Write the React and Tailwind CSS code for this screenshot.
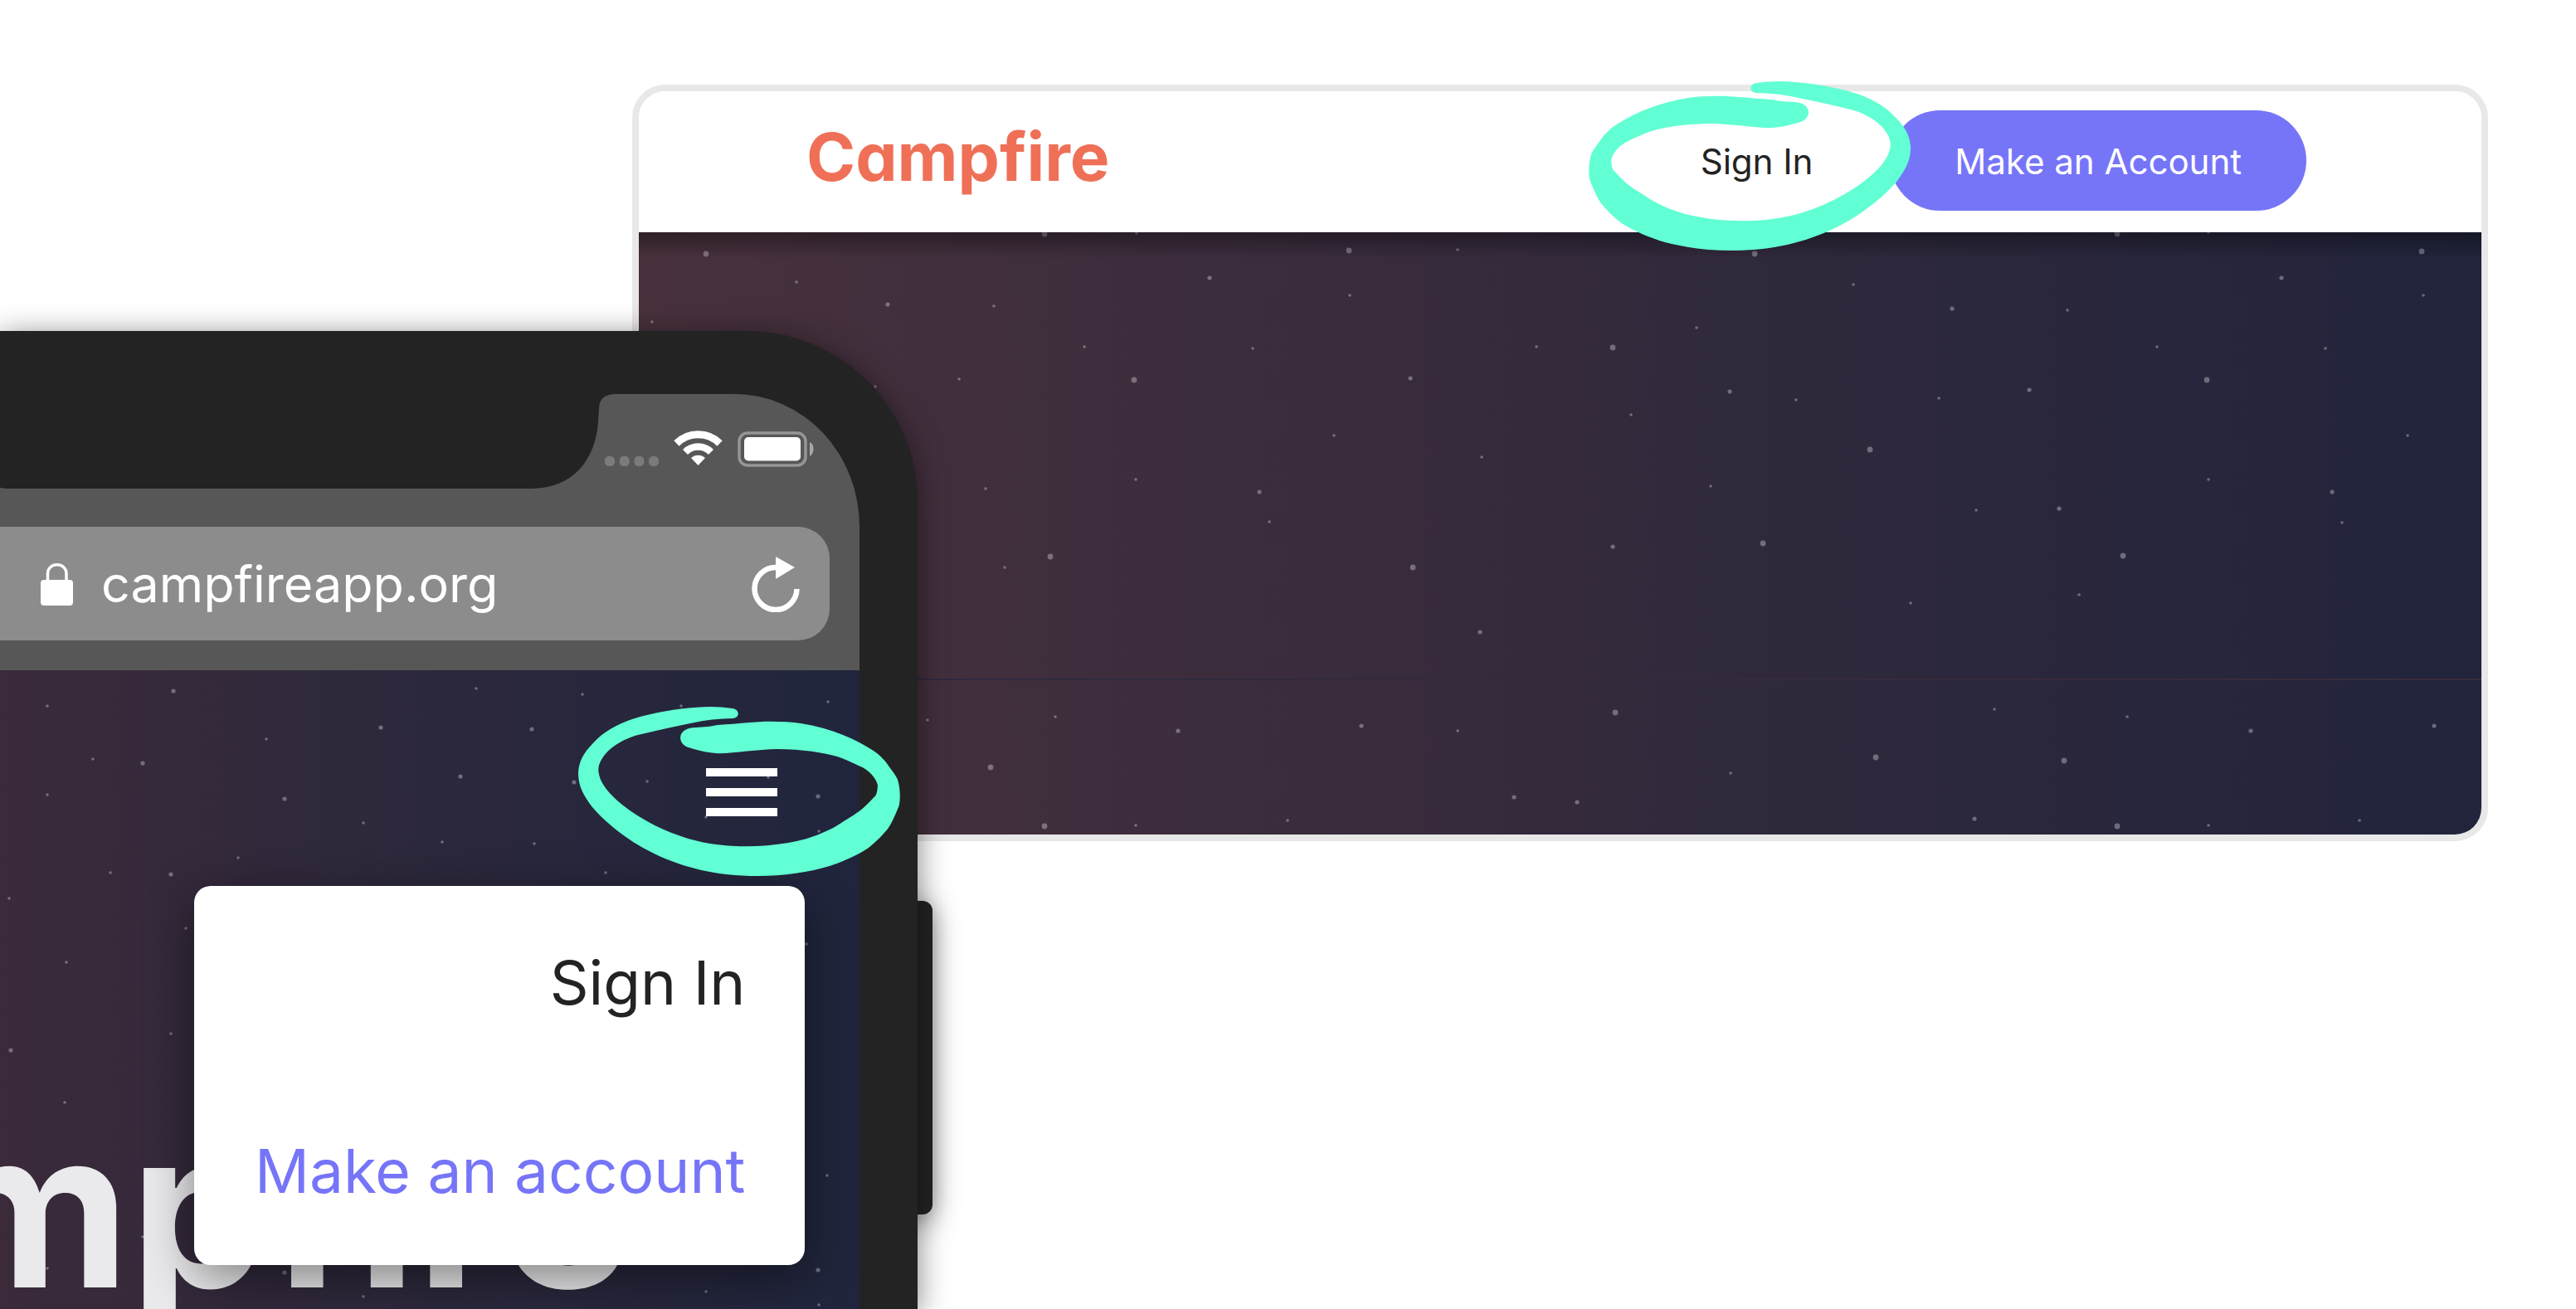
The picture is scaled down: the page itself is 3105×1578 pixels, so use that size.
import React from "react";

const BIG = 4;
const MID = 3;
const SMALL = 2;

const skyStars = [
  [851, 306, BIG], [960, 340, SMALL], [1070, 367, MID], [1198, 369, SMALL], [1259, 282, BIG],
  [1370, 281, SMALL], [1458, 335, MID], [786, 388, SMALL], [1307, 418, SMALL], [1510, 420, SMALL],
  [1156, 457, SMALL], [1367, 458, BIG], [1055, 466, SMALL], [1626, 302, BIG], [1757, 301, SMALL],
  [1627, 356, SMALL], [2045, 395, SMALL], [1852, 418, SMALL], [1944, 419, BIG], [1700, 456, MID],
  [2085, 472, MID], [1966, 500, SMALL], [1608, 525, SMALL], [1786, 551, SMALL], [1369, 578, SMALL],
  [1188, 589, SMALL], [1518, 593, MID], [2062, 586, SMALL], [1530, 629, SMALL], [1266, 671, BIG],
  [1211, 684, SMALL], [1944, 659, MID], [1703, 684, BIG], [1784, 762, MID], [1118, 868, SMALL],
  [1272, 864, SMALL], [1420, 881, MID], [1641, 875, MID], [1757, 881, SMALL], [1947, 859, BIG],
  [1194, 925, BIG], [2086, 932, SMALL], [1825, 961, MID], [1901, 967, MID], [1259, 996, BIG],
  [1369, 995, SMALL], [1552, 989, SMALL], [2115, 306, BIG], [2234, 343, SMALL], [2353, 372, MID],
  [2492, 374, SMALL], [2552, 282, BIG], [2662, 280, SMALL], [2919, 303, BIG], [2750, 335, MID],
  [2921, 356, SMALL], [2600, 418, SMALL], [2803, 420, SMALL], [2446, 470, MID], [2337, 480, SMALL],
  [2165, 482, SMALL], [2660, 458, BIG], [2902, 525, SMALL], [2254, 542, BIG], [2662, 578, SMALL],
  [2811, 593, MID], [2382, 615, SMALL], [2482, 613, MID], [2823, 630, SMALL], [2125, 655, BIG],
  [2559, 670, BIG], [2506, 717, SMALL], [2303, 727, SMALL], [2404, 855, SMALL], [2564, 864, SMALL],
  [2713, 881, MID], [2934, 875, MID], [2261, 913, BIG], [2488, 917, BIG], [2380, 987, MID],
  [2552, 996, BIG], [2662, 995, SMALL], [2844, 989, SMALL],
];

const phoneStars = [
  [57, 851, SMALL], [209, 833, MID], [574, 830, SMALL], [702, 837, SMALL], [459, 877, MID],
  [641, 879, MID], [321, 891, SMALL], [112, 915, SMALL], [172, 920, MID], [57, 958, SMALL],
  [343, 963, MID], [555, 936, MID], [692, 943, MID], [438, 992, SMALL], [533, 1015, SMALL],
  [644, 1017, SMALL], [287, 1034, SMALL], [133, 1052, SMALL], [206, 1054, MID], [11, 1083, SMALL],
  [224, 1119, SMALL], [80, 1160, SMALL], [821, 851, SMALL], [998, 846, SMALL], [780, 942, SMALL],
  [926, 937, SMALL], [986, 960, MID], [851, 985, SMALL], [987, 1002, SMALL], [730, 1052, SMALL],
  [972, 1138, SMALL], [206, 1246, SMALL], [13, 1266, MID], [78, 1329, SMALL], [997, 1417, SMALL],
  [172, 1491, SMALL], [343, 1534, MID], [986, 1531, MID], [851, 1557, SMALL], [438, 1563, SMALL],
  [987, 1573, SMALL], [57, 1529, SMALL],
];

function Stars({ points, x, y }) {
  return (
    <svg className="absolute inset-0 h-full w-full" aria-hidden="true">
      <g transform={`translate(${-x} ${-y})`} fill="#ffffff" fillOpacity="0.32">
        {points.map(([cx, cy, r]) => (
          <circle key={`${cx}-${cy}`} cx={cx} cy={cy} r={r === BIG ? 3.4 : r === MID ? 2.6 : 1.8} />
        ))}
      </g>
    </svg>
  );
}

function Scribble({ className }) {
  return (
    <svg
      viewBox="0 0 1320 690"
      className={`pointer-events-none absolute h-[230px] w-[440px] max-w-none ${className}`}
      aria-hidden="true"
    >
      <path
        fill="#62ffd4"
        d="M650 66C624 64 624 33 652 30C690 24 735 22 780 26C860 30 930 46 985 60C1060 80 1115 112 1155 155C1190 190 1209 225 1209 268C1207 318 1188 345 1160 385C1105 450 1020 515 930 557C830 605 710 636 560 636C470 636 370 622 300 600C240 580 190 555 160 535C130 510 110 490 90 466C75 445 65 420 50 385C44 365 43 320 55 285C65 265 75 255 92 230C112 205 130 190 150 178C220 132 310 100 400 85C470 75 540 76 600 82C650 87 680 88 705 90C740 97 765 98 795 100C850 104 854 158 808 172C770 184 730 192 700 193C640 191 560 178 490 177C400 177 320 190 270 205C235 217 215 228 180 244C150 262 132 285 126 308C127 325 129 335 133 344C150 362 170 383 190 400C215 418 230 427 252 440C290 467 350 493 410 508C480 524 560 531 640 528C740 524 820 503 900 468C980 432 1060 380 1105 325C1122 304 1134 280 1136 256C1137 235 1128 212 1100 183C1070 155 1030 135 990 125C930 111 870 97 800 83C750 73 700 66 650 66Z"
      />
    </svg>
  );
}

function BrowserWindow() {
  return (
    <section className="mr-[106px] ml-[762px] rounded-[40px] border-8 border-[#e8e8e8] bg-white">
      <header className="relative z-10 flex h-[170px] items-center justify-between rounded-t-[32px] bg-white pr-[211px] pb-1 pl-[202px]">
        <a
          href="#home"
          className="pb-2 text-[80px] leading-[80px] font-bold text-[#ef7057] [font-feature-settings:'cv11']"
        >
          Campfire
        </a>
        <nav className="flex items-center gap-[93px]">
          <a href="#sign-in" className="relative z-10 pt-1 text-[42px] leading-[56px] text-[#232323]">
            Sign In
            <Scribble className="-top-[73px] -left-[150px]" />
          </a>
          <button type="button" className="h-[121px] rounded-full bg-[#7675f8] px-[78px] pt-1 text-[42px] leading-[56px] text-white">
            Make an Account
          </button>
        </nav>
      </header>
      <div className="relative h-[726px] overflow-hidden rounded-b-[32px] bg-linear-to-r from-[#48313d] via-[#342a3c] to-[#21243c]">
        <Stars points={skyStars} x={770} y={280} />
        <div className="absolute inset-x-0 top-0 h-[32px] bg-linear-to-b from-black/35 to-transparent" />
        <div className="absolute inset-x-0 top-[538px] h-[2px] bg-linear-to-r from-[#2c2a40] via-[#342a3c] to-[#3a2b3c]" />
      </div>
    </section>
  );
}

function StatusBar() {
  return (
    <div className="relative flex h-[160px] items-start justify-end bg-[#575757] pt-[43px] pr-[53px] [border-top-right-radius:160px_170px]">
      <svg viewBox="0 0 760 120" className="absolute top-0 left-0 h-[120px] w-[760px]" aria-hidden="true">
        <path
          fill="#232323"
          d="M0 -1H742V0C729 0 722 6 722 18L721 33C718 80 690 114 640 114H8L0 113Z"
        />
      </svg>
      <svg viewBox="0 0 254 48" className="relative h-[48px] w-[254px]" aria-hidden="true">
        <g fill="#7b7b7b">
          <rect x="0" y="32" width="12" height="12" rx="5" />
          <rect x="17.700" y="32" width="12" height="12" rx="5" />
          <rect x="35.400" y="32" width="12" height="12" rx="5" />
          <rect x="53" y="32" width="12" height="12" rx="5" />
        </g>
        <g fill="none" stroke="#ffffff">
          <path d="M86.500 16.500A37 37 0 0 1 138.500 16.500" strokeWidth="9" />
          <path d="M97 27A22 22 0 0 1 128 27" strokeWidth="8.500" />
        </g>
        <path d="M104 34A12.500 12.500 0 0 1 121 34L112.500 43Z" fill="#ffffff" />
        <rect x="162" y="4" width="80" height="39" rx="10" fill="none" stroke="#969696" strokeWidth="3.500" />
        <rect x="168" y="9" width="68" height="28.500" rx="5" fill="#ffffff" />
        <path d="M247 15C253 17 253 29 247 32Z" fill="#a8a8a8" />
      </svg>
    </div>
  );
}

function AddressBar() {
  return (
    <div className="bg-[#575757] pr-9 pb-9">
      <div className="flex h-[137px] items-center rounded-r-[38px] bg-[#8c8c8c] pr-[34px] pl-[49px]">
        <svg viewBox="0 0 39 52" className="h-[52px] w-[39px] shrink-0" aria-hidden="true">
          <path d="M8.500 24V14C8.500 -1 31 -1 31 14V24" fill="none" stroke="#ffffff" strokeWidth="3.500" />
          <rect x="0" y="21" width="39" height="31" rx="4" fill="#ffffff" />
        </svg>
        <input
          readOnly
          aria-label="Address"
          value="campfireapp.org"
          className="ml-[34px] min-w-0 flex-1 bg-transparent text-[61px] leading-[80px] text-white outline-none"
        />
        <button type="button" aria-label="Reload" className="shrink-0">
          <svg viewBox="0 0 60 68" className="h-[68px] w-[60px]">
            <path d="M29 14A25.500 25.500 0 1 0 54.500 40" fill="none" stroke="#ffffff" strokeWidth="6.500" />
            <path d="M29 1L52 14L29 28Z" fill="#ffffff" />
          </svg>
        </button>
      </div>
    </div>
  );
}

function Phone() {
  return (
    <section className="absolute top-[399px] bottom-0 left-0 w-[1106px]">
      <div className="absolute top-[687px] -right-[18px] h-[378px] w-[60px] rounded-[12px] bg-[#232323] shadow-[0_6px_32px_rgba(0,0,0,0.5)]" />
      <div className="relative h-full rounded-tr-[206px] bg-[#232323] pt-[76px] pr-[70px] shadow-[0_6px_36px_rgba(0,0,0,0.5)]">
        <div className="flex h-full flex-col">
          <StatusBar />
          <AddressBar />
          <div className="relative flex-1 bg-linear-to-r from-[#3a2a3a] via-[#2c283c] to-[#20253d]">
            <Stars points={phoneStars} x={0} y={808} />
            <div className="flex justify-end pt-[118px] pr-[99px]">
              <button type="button" aria-label="Menu" className="relative z-10 flex w-[86px] flex-col gap-[14px]">
                <span className="block h-[10px] bg-white" />
                <span className="block h-[10px] bg-white" />
                <span className="block h-[10px] bg-white" />
                <Scribble className="-top-[82px] -left-[191px] -scale-x-100" />
              </button>
            </div>
            <h1 className="absolute top-[488px] -left-[446px] text-[264px] leading-[320px] font-bold text-[#eae9eb] [font-feature-settings:'cv11']">
              Campfire
            </h1>
            <ul className="absolute top-[260px] right-[66px] grid h-[457px] w-[736px] grid-rows-2 items-center rounded-[20px] bg-white px-[73px] pt-1 text-right text-[73px] leading-[88px] whitespace-nowrap shadow-[0_16px_60px_rgba(0,0,0,0.45)]">
              <li>
                <a href="#sign-in" className="text-[#232323]">Sign In</a>
              </li>
              <li>
                <a href="#sign-up" className="text-[#7675f8]">Make an account</a>
              </li>
            </ul>
          </div>
        </div>
      </div>
    </section>
  );
}

export default function App() {
  return (
    <main className="relative min-h-screen overflow-hidden bg-white pt-[102px] font-['Inter','Liberation_Sans',sans-serif]">
      <BrowserWindow />
      <Phone />
    </main>
  );
}
